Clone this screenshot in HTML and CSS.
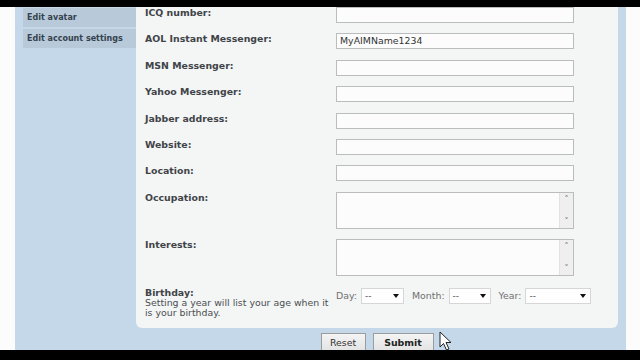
FILE: index.html
```html
<!DOCTYPE html>
<html>
<head>
<meta charset="utf-8">
<link rel="stylesheet" href="styles.css">
</head>
<body>
<div class="topbar"></div>
<div class="page">
  <div class="main">
    <div class="menu">
      <div class="menu-item">Edit avatar</div>
      <div class="menu-item">Edit account settings</div>
    </div>
    <div class="content">
      <div class="panel">
        <div class="row"><div class="label">ICQ number:</div><div class="field"><div class="input"></div></div></div>
        <div class="row"><div class="label">AOL Instant Messenger:</div><div class="field"><div class="input">MyAIMName1234</div></div></div>
        <div class="row"><div class="label">MSN Messenger:</div><div class="field"><div class="input"></div></div></div>
        <div class="row"><div class="label">Yahoo Messenger:</div><div class="field"><div class="input"></div></div></div>
        <div class="row"><div class="label">Jabber address:</div><div class="field"><div class="input"></div></div></div>
        <div class="row"><div class="label">Website:</div><div class="field"><div class="input"></div></div></div>
        <div class="row"><div class="label">Location:</div><div class="field"><div class="input"></div></div></div>
        <div class="row row-area"><div class="label">Occupation:</div><div class="field"><div class="textarea"><div class="ta-body"></div><div class="sb"><span class="up">&#708;</span><span class="down">&#709;</span></div></div></div></div>
        <div class="row row-area"><div class="label">Interests:</div><div class="field"><div class="textarea"><div class="ta-body"></div><div class="sb"><span class="up">&#708;</span><span class="down">&#709;</span></div></div></div></div>
        <div class="row row-bday">
          <div class="label"><b>Birthday:</b><span class="explain">Setting a year will list your age when it is your birthday.</span></div>
          <div class="field bday">
            <span class="bl">Day:</span><div class="select s-day"><span>--</span><i class="tri"></i></div>
            <span class="bl">Month:</span><div class="select s-month"><span>--</span><i class="tri"></i></div>
            <span class="bl">Year:</span><div class="select s-year"><span>--</span><i class="tri"></i></div>
          </div>
        </div>
      </div>
      <div class="buttons">
        <div class="btn">Reset</div>
        <div class="btn btn-submit">Submit</div>
      </div>
    </div>
    <div class="right-strip"></div>
  </div>
</div>
<div class="bottombar"></div>
<svg class="cursor" width="14" height="20" viewBox="0 0 14 20"><path d="M1 1 L1 16 L4.5 12.5 L7.5 19 L10 18 L7 11.5 L12 11.5 Z" fill="#fff" stroke="#222" stroke-width="1"/></svg>
</body>
</html>
```
FILE: styles.css
```css
html, body { margin: 0; padding: 0; }
body {
  width: 640px; height: 360px; overflow: hidden; background: #fcfcfc;
  font-family: "DejaVu Sans", Verdana, sans-serif; position: relative;
}
.topbar { height: 7px; background: #000; }
.bottombar { position: absolute; left: 0; right: 0; top: 350px; height: 10px; background: #000; }
.page { height: 343px; padding-left: 15px; overflow: hidden; }
.main { display: flex; width: 611px; height: 343px; background: #c5d8e9; overflow: hidden; }
.menu { width: 113px; padding-left: 8px; padding-top: 1px; display: flex; flex-direction: column; gap: 2px; }
.menu-item {
  height: 19px; line-height: 19px; padding-left: 4px; background: #b8cada;
  font-size: 8px; font-weight: bold; color: #35424d; white-space: nowrap;
}
.content { width: 482px; display: flex; flex-direction: column; }
.panel {
  background: #f4f5f5; border-radius: 0 0 6px 6px; padding: 0 0 0 9px;
  height: 321px; box-sizing: border-box; flex-shrink: 0;
}
.row { display: flex; height: 26.4px; }
.row-area { height: 47px; }
.label { width: 191px; font-size: 9.4px; font-weight: bold; color: #404448; line-height: 11px; padding-top: 0; }
.field { width: 238px; }
.input {
  height: 14px; border: 1px solid #bbbcbc; background: #fcfcfc;
  font-size: 9.4px; line-height: 14px; color: #333; padding-left: 3px;
}
.textarea { display: flex; height: 35px; border: 1px solid #bbbcbc; background: #fcfcfc; }
.ta-body { flex: 1; }
.sb {
  width: 13px; background: #efefef; border-left: 1px solid #e2e2e2;
  display: flex; flex-direction: column; justify-content: space-between; align-items: center;
  font-size: 8px; color: #666; line-height: 10px; padding: 2px 0 1px;
}
.row-bday { height: auto; padding-top: 1px; }
.explain { display: block; width: 186px; font-weight: normal; color: #4a4e52; line-height: 10px; }
.label b { display: block; line-height: 11px; }
.bday { display: flex; align-items: center; height: 16px; margin-top: 1px; width: 270px; }
.bl { font-size: 9.4px; color: #707070; margin-right: 4px; }
.select {
  position: relative; height: 16px; border: 1px solid #d6d6d6; background: #fefefe;
  box-sizing: border-box; font-size: 9px; color: #555; line-height: 14px; padding-left: 3px; margin-right: 8px;
}
.s-day { width: 43px; }
.s-month { width: 42px; }
.s-year { width: 66px; }
.tri {
  position: absolute; right: 4px; top: 5px; width: 0; height: 0;
  border-left: 3px solid transparent; border-right: 3px solid transparent; border-top: 4px solid #111;
}
.buttons { display: flex; justify-content: center; gap: 7px; margin-top: 5px; flex-shrink: 0; }
.btn {
  height: 20px; box-sizing: border-box; border: 1px solid #9c9c9c; background: linear-gradient(#f4f4f4, #e2e2e2);
  font-size: 9.4px; color: #333; line-height: 18px; text-align: center; width: 45px;
}
.btn-submit { width: 61px; font-weight: bold; color: #222; }
.right-strip { width: 8px; }
.cursor { position: absolute; left: 439px; top: 331px; }
```
